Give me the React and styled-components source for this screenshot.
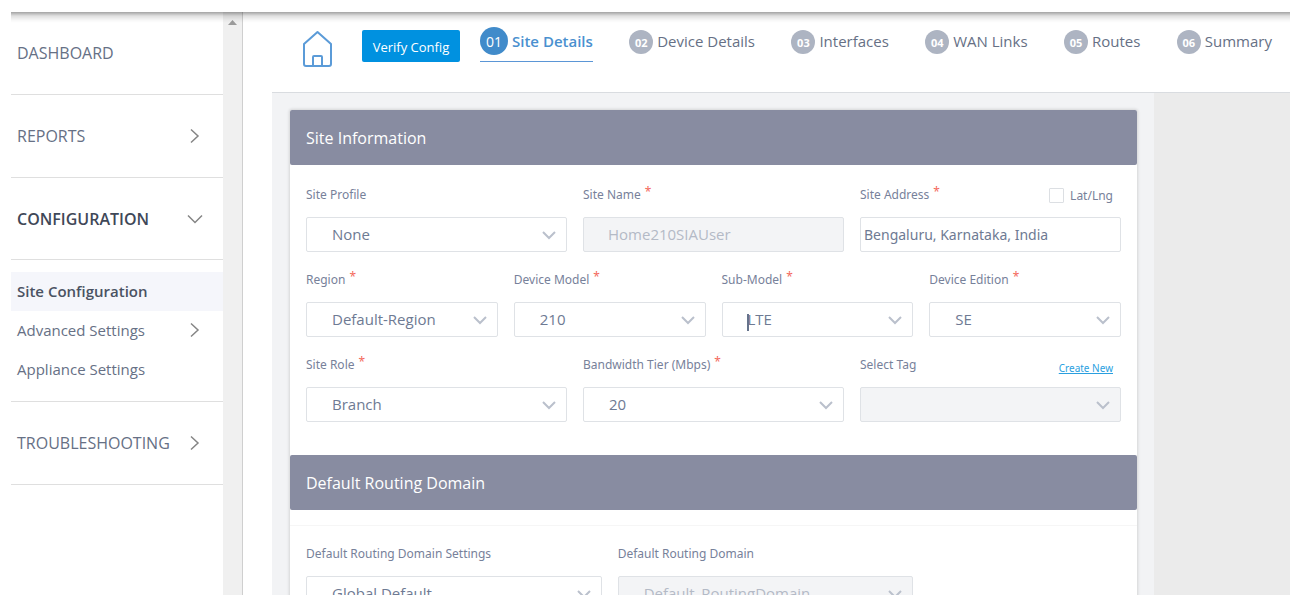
import React from "react";
import styled, { createGlobalStyle, css } from "styled-components";

const GlobalStyle = createGlobalStyle`
  *, *::before, *::after { box-sizing: border-box; }
  body {
    margin: 0;
    background: #fff;
    color: #5f6880;
    font-family: "Open Sans", "Noto Sans", sans-serif;
    font-size: 15px;
  }
  button, input, select { font: inherit; color: inherit; margin: 0; }
`;

const Shell = styled.div`
  position: relative;
  display: flex;
  height: calc(100vh - 25px);
  margin: 12px 8px 13px 11px;
  overflow: hidden;

  &::before {
    content: "";
    position: absolute;
    z-index: 2;
    inset: 0 0 auto;
    height: 11px;
    pointer-events: none;
    background: linear-gradient(rgba(0, 0, 0, 0.36), rgba(0, 0, 0, 0.12) 36%, rgba(0, 0, 0, 0.03) 75%, transparent);
  }
`;

const Sidebar = styled.nav`
  flex: none;
  width: 212px;
`;

const NavLink = styled.a`
  display: flex;
  align-items: center;
  justify-content: space-between;
  height: ${(p) => (p.$active ? 82 : 83)}px;
  padding: 0 20px 0 6px;
  border-bottom: 1px solid #dfdfdf;
  color: ${(p) => (p.$active ? "#3f4858" : "#667085")};
  font-size: 16px;
  font-weight: ${(p) => (p.$active ? 600 : 400)};
  text-decoration: none;
`;

const SubNav = styled.div`
  padding: 12px 0;
  border-bottom: 1px solid #dfdfdf;
`;

const SubLink = styled.a`
  display: flex;
  align-items: center;
  justify-content: space-between;
  height: 39px;
  padding: 0 20px 1px 6px;
  background: ${(p) => (p.$active ? "#f5f6fb" : "transparent")};
  color: ${(p) => (p.$active ? "#4a5262" : "#667085")};
  font-weight: ${(p) => (p.$active ? 600 : 400)};
  text-decoration: none;
`;

const ArrowIcon = styled.svg`
  flex: none;
  width: 16px;
  height: 16px;
  fill: none;
  stroke: #858585;
  stroke-width: 1.5;
`;

const ScrollTrack = styled.div`
  flex: none;
  display: flex;
  justify-content: center;
  width: 20px;
  padding-top: 8px;
  background: #f0f0f0;
  border-right: 1px solid #cfcfcf;
`;

const ScrollArrow = styled.svg`
  width: 9px;
  height: 5px;
  fill: #9b9b9b;
`;

const Main = styled.main`
  flex: 1;
  min-width: 0;
  display: flex;
  flex-direction: column;
  padding-left: 29px;
`;

const TopBar = styled.header`
  flex: none;
  display: flex;
  align-items: flex-start;
  height: 81px;
  padding: 15px 18px 0 30px;
  border-bottom: 1px solid #d9dce0;
`;

const HomeLink = styled.a`
  display: flex;
  padding-top: 3px;
  margin-right: 29px;
`;

const VerifyButton = styled.button`
  flex: none;
  width: 98px;
  height: 32px;
  margin: 3px 20px 0 0;
  padding: 2px 0 0;
  border: 0;
  border-radius: 2px;
  background: #0091e0;
  color: #fff;
  font-size: 13px;
  white-space: nowrap;
`;

const Steps = styled.div`
  flex: 1;
  display: flex;
  justify-content: space-between;
`;

const StepLink = styled.a`
  display: flex;
  align-items: center;
  gap: 4px;
  height: 28px;
  color: #667085;
  font-size: 15px;
  text-decoration: none;
  white-space: nowrap;

  ${(p) =>
    p.$active &&
    css`
      height: 35px;
      padding-bottom: 6px;
      border-bottom: 1px solid #5b96d6;
      color: #4a90cf;
      font-weight: 600;
    `}
`;

const StepNumber = styled.span`
  display: grid;
  place-items: center;
  width: ${(p) => (p.$active ? 28 : 24)}px;
  height: ${(p) => (p.$active ? 28 : 24)}px;
  margin-top: ${(p) => (p.$active ? 0 : 2)}px;
  border-radius: 50%;
  background: ${(p) => (p.$active ? "#418bca" : "#adb4c2")};
  color: #fff;
  font-size: ${(p) => (p.$active ? 14 : 11)}px;
  font-weight: ${(p) => (p.$active ? 400 : 700)};
`;

const Body = styled.div`
  flex: 1;
  min-height: 0;
  overflow: hidden;
  padding-right: 136px;
  background: #ebebeb;
`;

const Canvas = styled.div`
  min-height: 100%;
  padding: 17px 17px 0 18px;
  background: #f2f3f5;
`;

const Card = styled.section`
  background: #fff;
  border-radius: 2px;
  box-shadow: 0 0 3px 1px rgba(0, 0, 0, 0.12);
`;

const CardTitle = styled.h2`
  display: flex;
  align-items: center;
  height: 55px;
  margin: 0;
  padding: 0 16px;
  border-radius: 2px;
  background: #888ca1;
  color: #fff;
  font-size: 16px;
  font-weight: 400;
`;

const Form = styled.div`
  display: flex;
  flex-direction: column;
  gap: 17px;
  padding: 19px 16px 33px;
`;

const RoutingForm = styled(Form)`
  margin-top: 15px;
  border-top: 1px solid #f6f6f6;
  padding-top: 17px;
`;

const FieldRow = styled.div`
  display: grid;
  grid-template-columns: repeat(${(p) => p.$columns}, 1fr);
  gap: 16px;
  ${(p) => p.$short && "width: calc(75% - 4px);"}
`;

const Field = styled.div`
  display: flex;
  flex-direction: column;
  gap: 11px;
  min-width: 0;
`;

const FieldHead = styled.div`
  display: flex;
  align-items: center;
  justify-content: space-between;
  height: 22px;
  padding-right: 8px;
  font-family: "Noto Sans", sans-serif;
  font-size: 12px;
  color: #77819a;
`;

const Label = styled.label`
  display: flex;
  gap: 4px;
  line-height: 20px;
  white-space: nowrap;
`;

const Required = styled.span`
  color: #f4695c;
  line-height: 14px;
`;

const control = css`
  width: 100%;
  height: 35px;
  border: 1px solid #dfe2e6;
  border-radius: 2px;
  background: #fff;
  color: #6e7a93;
  opacity: 1;
  outline: none;

  &:disabled {
    background: #f3f4f6;
    color: #b4bac6;
  }
`;

const TextInput = styled.input`
  ${control}
  padding: 0 24px 1px;

  ${(p) =>
    p.$compact &&
    css`
      padding: 0 3px;
      font-family: "Noto Sans", sans-serif;
      font-size: 14px;
    `}
`;

const SelectBox = styled.div`
  position: relative;
  display: flex;
  align-items: center;

  ${(p) =>
    p.$caret &&
    css`
      &::after {
        content: "";
        position: absolute;
        top: 12px;
        left: 25px;
        width: 2px;
        height: 17px;
        background: #66738c;
      }
    `}
`;

const Select = styled.select`
  ${control}
  appearance: none;
  padding: 0 36px 1px 25px;
`;

const SelectArrow = styled.svg`
  position: absolute;
  right: 10px;
  width: 16px;
  height: 16px;
  fill: none;
  stroke: #bac0cc;
  stroke-width: 2;
  pointer-events: none;
`;

const CheckLabel = styled.label`
  display: flex;
  align-items: center;
  gap: 6px;
`;

const Checkbox = styled.input`
  appearance: none;
  width: 15px;
  height: 15px;
  border: 1px solid #dcdfe3;
  border-radius: 1px;
  background: #fff;
`;

const CreateLink = styled.a`
  padding-top: 6px;
  color: #2a9fdf;
  font-size: 10px;
`;

const RIGHT = "M4 1.500 L11 8 L4 14.500";
const DOWN = "M1 4.500 L8 11.500 L15 4.500";

function NavArrow({ open }) {
  return (
    <ArrowIcon viewBox="0 0 16 16" aria-hidden="true">
      <path d={open ? DOWN : RIGHT} />
    </ArrowIcon>
  );
}

function LabelText({ id, text, required }) {
  return (
    <Label htmlFor={id}>
      {text}
      {required && <Required>*</Required>}
    </Label>
  );
}

function SelectField({ id, label, value, required, disabled, caret, aside }) {
  return (
    <Field>
      <FieldHead>
        <LabelText id={id} text={label} required={required} />
        {aside}
      </FieldHead>
      <SelectBox $caret={caret}>
        <Select id={id} disabled={disabled} defaultValue={value}>
          <option value={value}>{value}</option>
        </Select>
        <SelectArrow viewBox="0 0 16 16" aria-hidden="true">
          <path d="M2 5 L8 11 L14 5" />
        </SelectArrow>
      </SelectBox>
    </Field>
  );
}

function TextField({ id, label, value, disabled, compact, aside }) {
  return (
    <Field>
      <FieldHead>
        <LabelText id={id} text={label} required />
        {aside}
      </FieldHead>
      <TextInput id={id} type="text" defaultValue={value} disabled={disabled} $compact={compact} />
    </Field>
  );
}

const STEPS = ["Site Details", "Device Details", "Interfaces", "WAN Links", "Routes", "Summary"];

export default function App() {
  return (
    <>
      <GlobalStyle />
      <Shell>
        <Sidebar>
          <NavLink href="#dashboard">DASHBOARD</NavLink>
          <NavLink href="#reports">REPORTS<NavArrow /></NavLink>
          <NavLink href="#configuration" $active>CONFIGURATION<NavArrow open /></NavLink>
          <SubNav>
            <SubLink href="#site" $active>Site Configuration</SubLink>
            <SubLink href="#advanced">Advanced Settings<NavArrow /></SubLink>
            <SubLink href="#appliance">Appliance Settings</SubLink>
          </SubNav>
          <NavLink href="#troubleshooting">TROUBLESHOOTING<NavArrow /></NavLink>
        </Sidebar>
        <ScrollTrack>
          <ScrollArrow viewBox="0 0 9 5" aria-hidden="true">
            <path d="M0 5 L4.5 0 L9 5 Z" />
          </ScrollArrow>
        </ScrollTrack>
        <Main>
          <TopBar>
            <HomeLink href="#home" aria-label="Home">
              <svg width="31" height="38" viewBox="0 0 31 38" fill="none" stroke="#5b9bd8" strokeWidth="2" strokeLinejoin="round">
                <path d="M2 14 L15.500 2 L29 14 V34 Q29 36 27 36 H4 Q2 36 2 34 Z" />
                <path d="M11 36 V27 Q11 26 12 26 H19 Q20 26 20 27 V36" />
              </svg>
            </HomeLink>
            <VerifyButton type="button">Verify Config</VerifyButton>
            <Steps>
              {STEPS.map((step, i) => (
                <StepLink key={step} href={`#step-${i + 1}`} $active={i === 0}>
                  <StepNumber $active={i === 0}>{`0${i + 1}`}</StepNumber>
                  {step}
                </StepLink>
              ))}
            </Steps>
          </TopBar>
          <Body>
            <Canvas>
              <Card>
                <CardTitle>Site Information</CardTitle>
                <Form>
                  <FieldRow $columns={3}>
                    <SelectField id="profile" label="Site Profile" value="None" />
                    <TextField id="name" label="Site Name" value="Home210SIAUser" disabled />
                    <TextField
                      id="address"
                      label="Site Address"
                      value="Bengaluru, Karnataka, India"
                      compact
                      aside={
                        <CheckLabel>
                          <Checkbox type="checkbox" />
                          Lat/Lng
                        </CheckLabel>
                      }
                    />
                  </FieldRow>
                  <FieldRow $columns={4}>
                    <SelectField id="region" label="Region" value="Default-Region" required />
                    <SelectField id="model" label="Device Model" value="210" required />
                    <SelectField id="submodel" label="Sub-Model" value="LTE" required caret />
                    <SelectField id="edition" label="Device Edition" value="SE" required />
                  </FieldRow>
                  <FieldRow $columns={3}>
                    <SelectField id="role" label="Site Role" value="Branch" required />
                    <SelectField id="bandwidth" label="Bandwidth Tier (Mbps)" value="20" required />
                    <SelectField
                      id="tag"
                      label="Select Tag"
                      value=""
                      disabled
                      aside={<CreateLink href="#new-tag">Create New</CreateLink>}
                    />
                  </FieldRow>
                </Form>
                <CardTitle>Default Routing Domain</CardTitle>
                <RoutingForm>
                  <FieldRow $columns={2} $short>
                    <SelectField id="rd-settings" label="Default Routing Domain Settings" value="Global Default" />
                    <SelectField id="rd" label="Default Routing Domain" value="Default_RoutingDomain" disabled />
                  </FieldRow>
                </RoutingForm>
              </Card>
            </Canvas>
          </Body>
        </Main>
      </Shell>
    </>
  );
}
